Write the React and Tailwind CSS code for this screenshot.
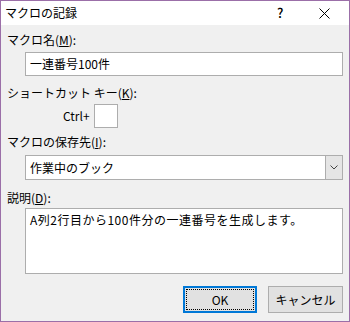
import React from "react";

export default function App() {
  const font = { fontFamily: '"Noto Sans CJK JP", "Noto Sans", sans-serif' };

  return (
    <div
      className="w-[350px] h-[322px] border border-[#9b6fa8] bg-[#f0f0f0] flex flex-col text-[12px] leading-[14px] text-black"
      style={font}
    >
      {/* Title bar */}
      <div className="h-[24px] bg-white flex items-center pl-[4px] shrink-0">
        <span className="flex-1">マクロの記録</span>
        <span className="w-[12px] text-[13px] mr-[30px] font-[500]">?</span>
        <svg width="11" height="11" viewBox="0 0 11 11" className="mr-[19px]">
          <path d="M0.5 0.5 L10.5 10.5 M10.5 0.5 L0.5 10.5" stroke="#000" strokeWidth="1" />
        </svg>
      </div>

      <div className="flex flex-col pl-[6px] pr-[6px]">
        {/* Macro name */}
        <div className="mt-[8px]">
          マクロ名(<span className="underline">M</span>):
        </div>
        <div className="mt-[5px] ml-[18px] h-[24px] bg-white border border-[#adadad] flex items-center pl-[4px]">
          一連番号100件
        </div>

        {/* Shortcut key */}
        <div className="mt-[10px]">
          ショートカット キー(<span className="underline">K</span>):
        </div>
        <div className="mt-[4px] flex items-center">
          <span className="ml-[56px] mr-[4px]">Ctrl+</span>
          <div className="w-[24px] h-[24px] bg-white border border-[#adadad]" />
        </div>

        {/* Store macro in */}
        <div className="mt-[7px]">
          マクロの保存先(<span className="underline">I</span>):
        </div>
        <div className="mt-[6px] ml-[18px] h-[25px] bg-white border border-[#adadad] flex items-center">
          <span className="flex-1 pl-[4px]">作業中のブック</span>
          <div className="w-[17px] h-[23px] bg-[#e5e5e5] border-l border-[#adadad] flex items-center justify-center">
            <svg width="8" height="5" viewBox="0 0 8 5">
              <path d="M0.5 0.5 L4 4 L7.5 0.5" stroke="#444" strokeWidth="1" fill="none" />
            </svg>
          </div>
        </div>

        {/* Description */}
        <div className="mt-[11px]">
          説明(<span className="underline">D</span>):
        </div>
        <div className="mt-[3px] ml-[18px] h-[66px] bg-white border border-[#adadad] pl-[4px] pt-[4px] tracking-[0.5px]">
          A列2行目から100件分の一連番号を生成します。
        </div>

        {/* Buttons */}
        <div className="mt-[12px] flex justify-end gap-[11px]">
          <div className="w-[74px] h-[27px] bg-[#e1e1e1] border-2 border-[#0078d7] p-[1px]">
            <div className="w-full h-full border border-dotted border-black flex items-center justify-center">
              OK
            </div>
          </div>
          <div className="w-[75px] h-[27px] bg-[#e1e1e1] border border-[#adadad] flex items-center justify-center">
            キャンセル
          </div>
        </div>
      </div>
    </div>
  );
}
